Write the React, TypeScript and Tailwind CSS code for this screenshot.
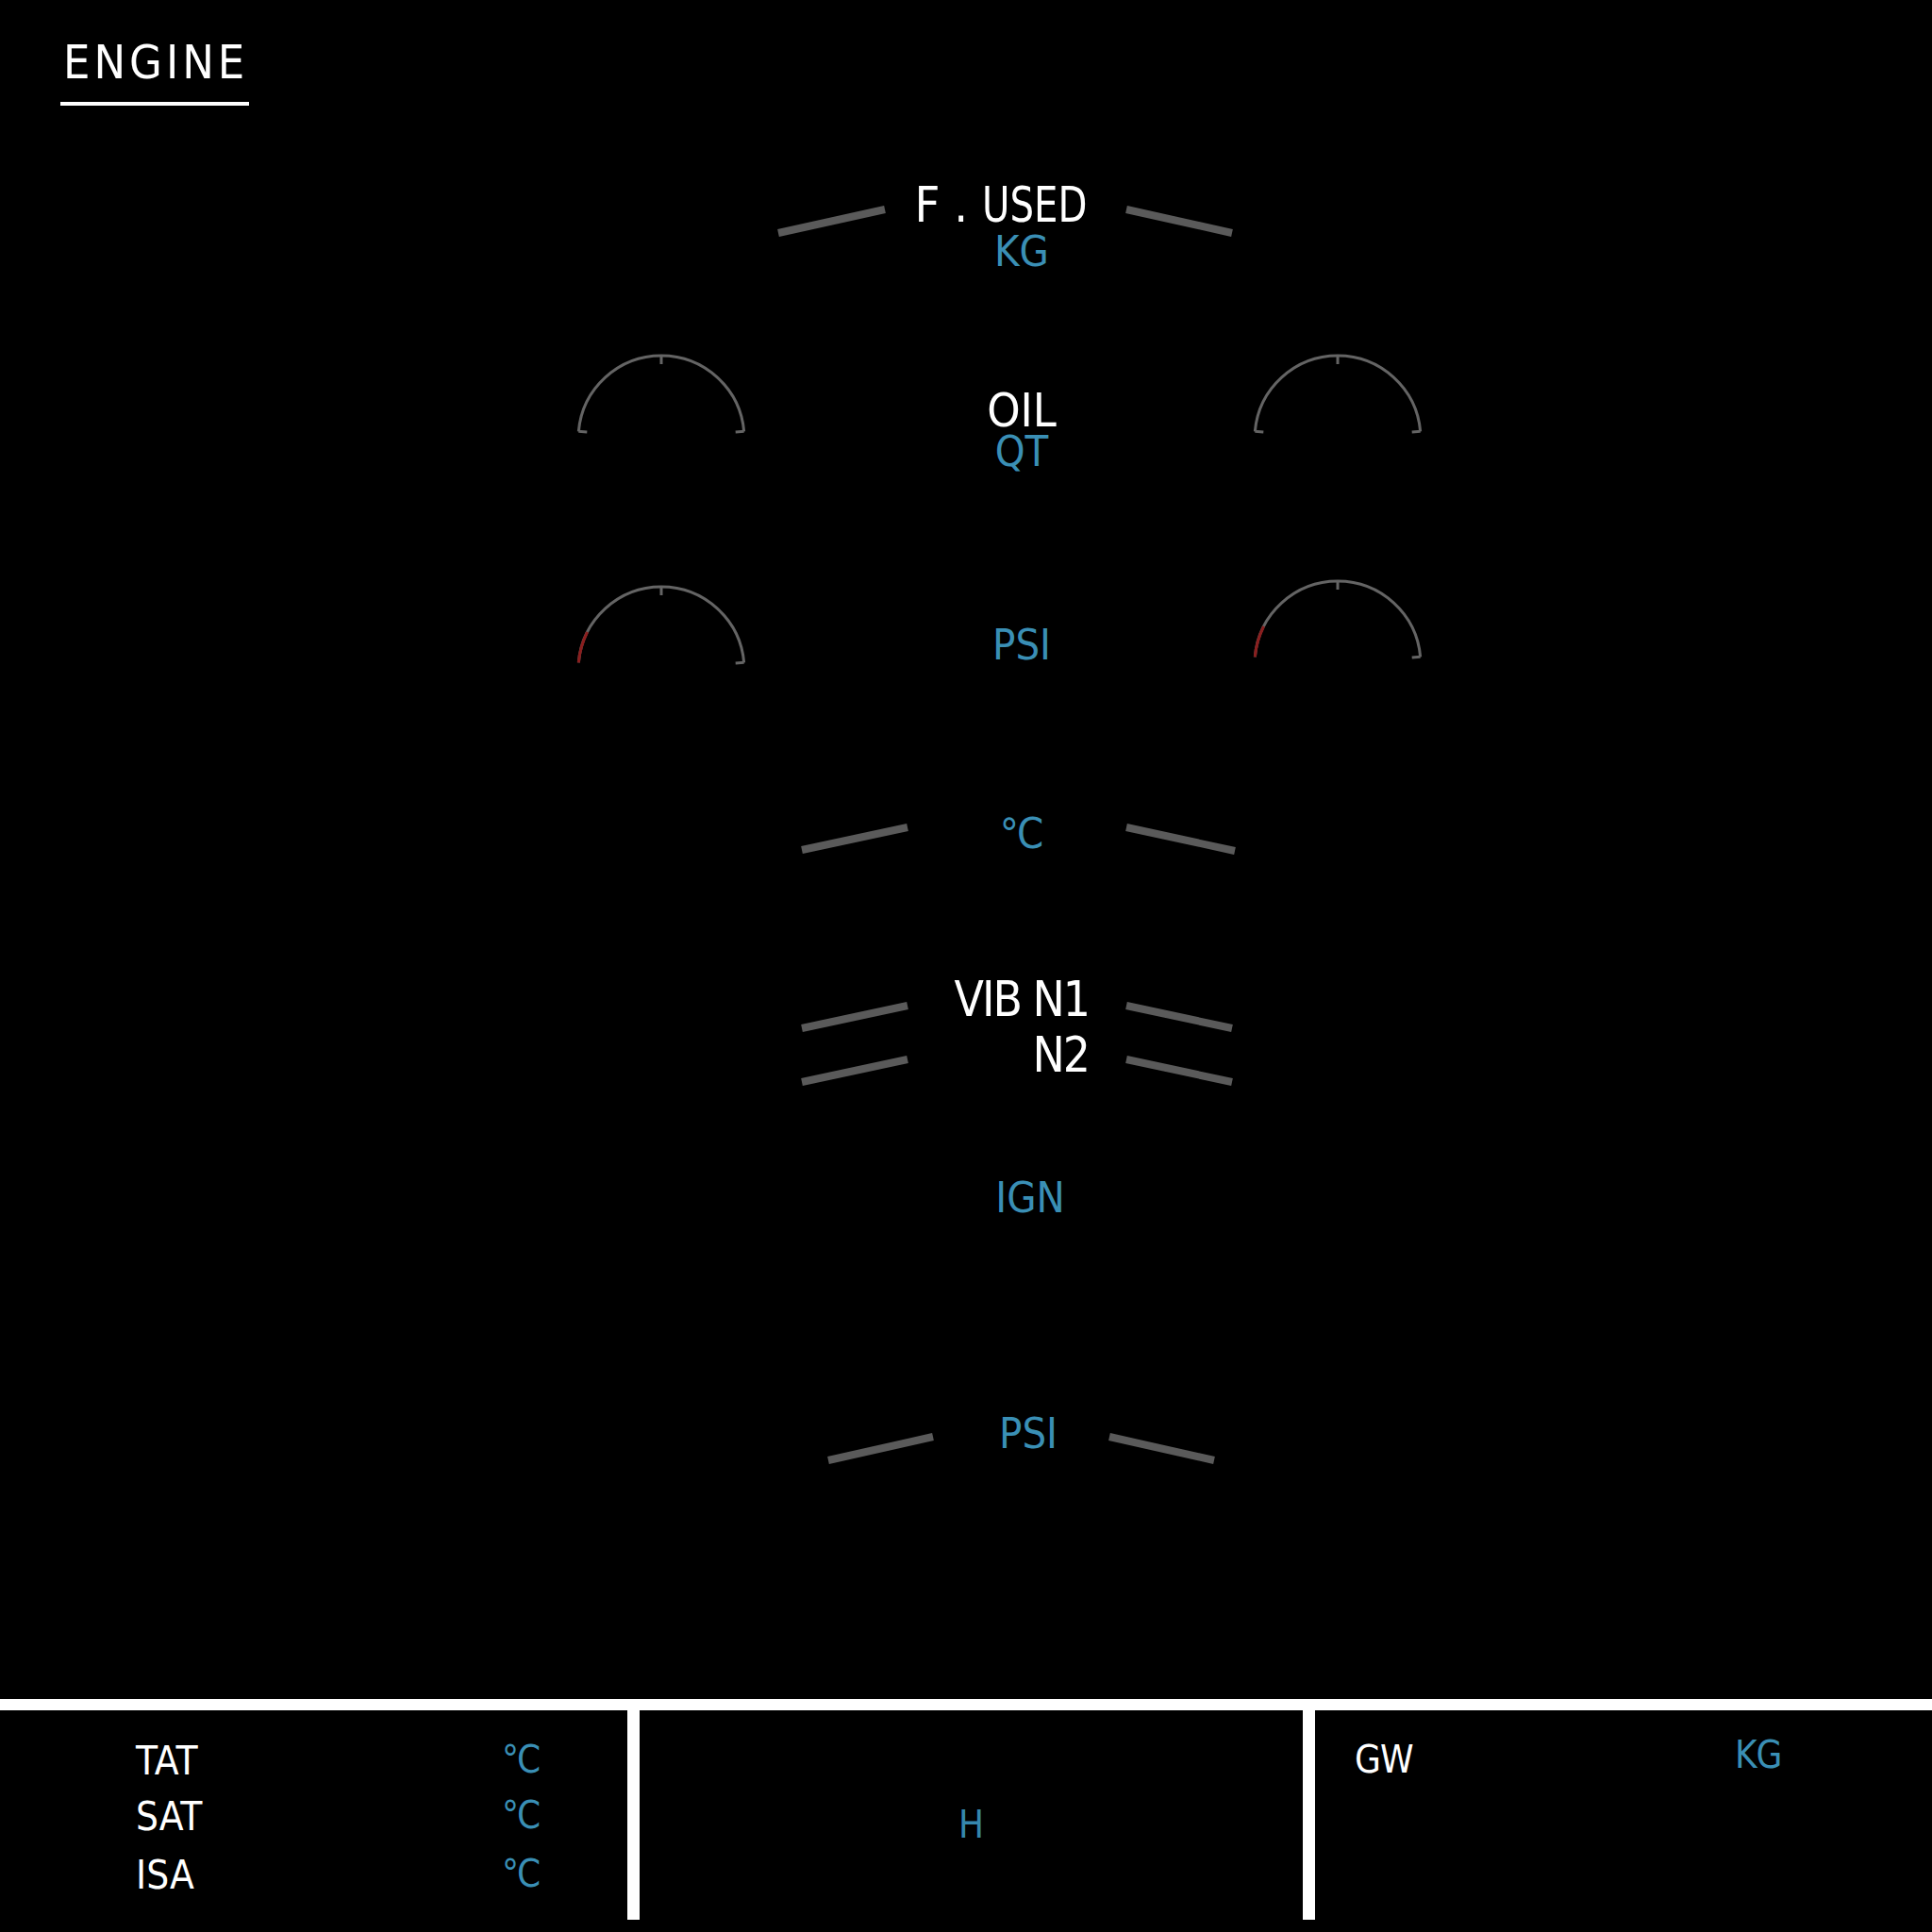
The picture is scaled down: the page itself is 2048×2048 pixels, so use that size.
import React from 'react'

type Seg = [number, number, number, number]

// grey bar(s) beside the labels
function Bars({ w, h, segs }: { w: number; h: number; segs: Seg[] }) {
  return (
    <svg width={w} height={h} viewBox={`0 0 ${w} ${h}`} className="block">
      {segs.map((s, i) => (
        <line key={i} x1={s[0]} y1={s[1]} x2={s[2]} y2={s[3]} stroke="#5a5a5a" strokeWidth={8} />
      ))}
    </svg>
  )
}

function Gauge({ red = false }: { red?: boolean }) {
  const cx = 100
  const cy = 100
  const R = 88
  const pt = (deg: number, r: number) => {
    const a = (deg * Math.PI) / 180
    return [cx + r * Math.cos(a), cy - r * Math.sin(a)]
  }
  const [lx, ly] = pt(175, R)
  const [rx, ry] = pt(5, R)
  const [redx, redy] = pt(153, R)
  const ticks = red ? [90, 5] : [175, 90, 5]
  return (
    <svg width={200} height={110} viewBox="0 0 200 110" className="block">
      <path d={`M ${lx} ${ly} A ${R} ${R} 0 0 1 ${rx} ${ry}`} fill="none" stroke="#646464" strokeWidth={3} />
      {ticks.map((t) => {
        const [x1, y1] = pt(t, R)
        const [x2, y2] = pt(t, R - 9)
        return <line key={t} x1={x1} y1={y1} x2={x2} y2={y2} stroke="#646464" strokeWidth={3} />
      })}
      {red && (
        <path d={`M ${lx} ${ly} A ${R} ${R} 0 0 1 ${redx} ${redy}`} fill="none" stroke="#8b1e1e" strokeWidth={3} />
      )}
    </svg>
  )
}

const font = "font-['Liberation_Sans_Narrow','DejaVu_Sans_Condensed',sans-serif]"

export default function App() {
  return (
    <div className={`w-[2048px] h-[2048px] bg-black text-white leading-none ${font}`}>
      {/* upper engine page */}
      <div className="h-[1801px] flex flex-col">
        {/* title */}
        <div className="h-[190px] pt-[41px] pl-[64px]">
          <div className="inline-flex flex-col">
            <span className="pl-[3px] text-[50px] tracking-[4px] leading-none">ENGINE</span>
            <div className="w-[200px] h-[4px] bg-white mt-[17px]" />
          </div>
        </div>

        {/* F.USED */}
        <div className="h-[110px] flex">
          <div className="w-[1000px] pl-[820px] pt-[25px]">
            <Bars w={125} h={40} segs={[[5, 32, 118, 7]]} />
          </div>
          <div className="w-[166px] flex flex-col items-center pt-[5px]">
            <span className="text-[52px] leading-[44px] whitespace-nowrap mr-[26px]">
              F . <span className="inline-block scale-x-[0.86] origin-left">USED</span>
            </span>
            <span className="text-[45px] leading-[40px] text-[#3a8fb5] mt-[8px]">KG</span>
          </div>
          <div className="flex-1 pl-[24px] pt-[25px]">
            <Bars w={125} h={40} segs={[[4, 7, 116, 32]]} />
          </div>
        </div>

        {/* OIL QT */}
        <div className="h-[260px] flex">
          <div className="w-[1000px] pl-[601px] pt-[65px]">
            <Gauge />
          </div>
          <div className="w-[166px] flex flex-col items-center pt-[115px]">
            <span className="text-[50px] leading-[40px]">OIL</span>
            <span className="text-[45px] leading-[40px] text-[#3a8fb5] mt-[4px]">QT</span>
          </div>
          <div className="flex-1 pl-[152px] pt-[65px]">
            <Gauge />
          </div>
        </div>

        {/* OIL PSI */}
        <div className="h-[240px] flex">
          <div className="w-[1000px] pl-[601px] pt-[50px]">
            <Gauge red />
          </div>
          <div className="w-[166px] flex flex-col items-center pt-[101px]">
            <span className="text-[45px] text-[#3a8fb5]">PSI</span>
          </div>
          <div className="flex-1 pl-[152px] pt-[44px]">
            <Gauge red />
          </div>
        </div>

        {/* OIL TEMP */}
        <div className="h-[180px] flex">
          <div className="w-[1000px] pl-[845px] pt-[70px]">
            <Bars w={122} h={38} segs={[[5, 31, 117, 7]]} />
          </div>
          <div className="w-[166px] flex flex-col items-center pt-[61px]">
            <span className="text-[45px] text-[#3a8fb5] tracking-[-2px] mr-[2px]">°C</span>
          </div>
          <div className="flex-1 pl-[24px] pt-[70px]">
            <Bars w={125} h={38} segs={[[4, 7, 119, 32]]} />
          </div>
        </div>

        {/* VIB */}
        <div className="h-[220px] flex">
          <div className="w-[1000px] pl-[845px] pt-[80px]">
            <Bars w={122} h={95} segs={[[5, 30, 117, 6], [5, 87, 117, 63]]} />
          </div>
          <div className="w-[166px] flex flex-col items-end pr-[12px] pt-[54px]">
            <span className="text-[51px] tracking-[-2px] whitespace-nowrap">VIB N1</span>
            <span className="text-[51px] tracking-[-2px] mt-[8px]">N2</span>
          </div>
          <div className="flex-1 pl-[24px] pt-[80px]">
            <Bars w={122} h={95} segs={[[4, 6, 116, 30], [4, 63, 116, 87]]} />
          </div>
        </div>

        {/* IGN */}
        <div className="h-[200px] flex">
          <div className="w-[1000px]" />
          <div className="w-[166px] flex flex-col items-center pt-[47px]">
            <span className="text-[45px] text-[#3a8fb5] ml-[18px]">IGN</span>
          </div>
          <div className="flex-1" />
        </div>

        {/* START AIR PSI */}
        <div className="h-[200px] flex">
          <div className="w-[1000px] pl-[873px] pt-[117px]">
            <Bars w={121} h={38} segs={[[5, 31, 116, 6]]} />
          </div>
          <div className="w-[166px] flex flex-col items-center pt-[97px]">
            <span className="text-[45px] text-[#3a8fb5] ml-[14px]">PSI</span>
          </div>
          <div className="flex-1 pl-[5px] pt-[117px]">
            <Bars w={121} h={38} segs={[[5, 6, 116, 31]]} />
          </div>
        </div>
      </div>

      {/* lower permanent data */}
      <div className="h-[12px] bg-white" />
      <div className="h-[222px] flex">
        <div className="w-[665px] pl-[144px] pt-[33px] flex flex-col">
          {['TAT', 'SAT', 'ISA'].map((l, i) => (
            <div key={l} className={`flex items-start ${i === 1 ? 'h-[62px]' : 'h-[59px]'}`}>
              <span className="w-[388px] text-[42px]">{l}</span>
              <span className="text-[40px] text-[#3a8fb5] tracking-[-2px] -mt-[1px]">°C</span>
            </div>
          ))}
        </div>
        <div className="w-[13px] bg-white" />
        <div className="w-[703px] flex justify-center pt-[101px]">
          <span className="text-[40px] text-[#3587ad]">H</span>
        </div>
        <div className="w-[13px] bg-white" />
        <div className="flex-1 flex pt-[27px]">
          <span className="ml-[42px] mt-[5px] w-[403px] text-[40px] tracking-[-1px]">GW</span>
          <span className="text-[40px] text-[#3a8fb5] tracking-[-1px]">KG</span>
        </div>
      </div>
    </div>
  )
}
